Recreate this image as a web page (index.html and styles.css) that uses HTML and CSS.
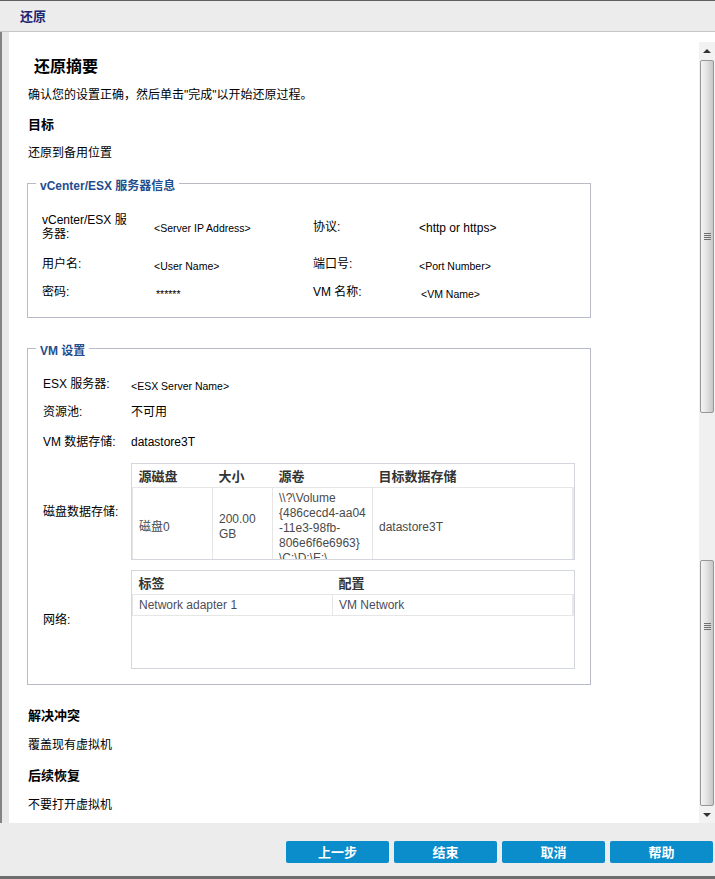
FILE: index.html
```html
<!DOCTYPE html>
<html lang="zh-CN">
<head>
<meta charset="utf-8">
<title>还原</title>
<link rel="stylesheet" href="styles.css">
</head>
<body>
<div class="window">
  <div class="titlebar"><span class="title">还原</span></div>
  <div class="body">
    <div class="gutter"></div>
    <div class="content">
      <div class="page">
        <h1 class="heading">还原摘要</h1>
        <p class="text desc">确认您的设置正确，然后单击"完成"以开始还原过程。</p>
        <h2 class="subhead">目标</h2>
        <p class="text">还原到备用位置</p>

        <fieldset class="group g1">
          <legend>vCenter/ESX 服务器信息</legend>
          <div class="info-grid">
            <div class="lbl">vCenter/ESX 服<br>务器:</div>
            <div class="val">&lt;Server IP Address&gt;</div>
            <div class="lbl">协议:</div>
            <div class="val big">&lt;http or https&gt;</div>
            <div class="lbl">用户名:</div>
            <div class="val">&lt;User Name&gt;</div>
            <div class="lbl">端口号:</div>
            <div class="val">&lt;Port Number&gt;</div>
            <div class="lbl">密码:</div>
            <div class="val shift">******</div>
            <div class="lbl">VM 名称:</div>
            <div class="val shift">&lt;VM Name&gt;</div>
          </div>
        </fieldset>

        <fieldset class="group g2">
          <legend>VM 设置</legend>
          <div class="vm-rows">
            <div class="vm-row r1"><div class="lbl">ESX 服务器:</div><div class="val">&lt;ESX Server Name&gt;</div></div>
            <div class="vm-row r2"><div class="lbl">资源池:</div><div class="val2">不可用</div></div>
            <div class="vm-row r3"><div class="lbl">VM 数据存储:</div><div class="val2">datastore3T</div></div>
            <div class="vm-row r4">
              <div class="lbl">磁盘数据存储:</div>
              <div class="gridbox disk">
                <table class="dt">
                  <colgroup><col class="c1"><col class="c2"><col class="c3"><col></colgroup>
                  <thead><tr><th>源磁盘</th><th>大小</th><th>源卷</th><th>目标数据存储</th></tr></thead>
                  <tbody><tr>
                    <td>磁盘0</td>
                    <td>200.00<br>GB</td>
                    <td class="vol">\\?\Volume<br>{486cecd4-aa04<br>-11e3-98fb-<br>806e6f6e6963}<br>\C:\D:\E:\</td>
                    <td class="last">datastore3T</td>
                  </tr></tbody>
                </table>
              </div>
            </div>
            <div class="vm-row r5">
              <div class="lbl">网络:</div>
              <div class="gridbox net">
                <table class="dt">
                  <colgroup><col class="n1"><col></colgroup>
                  <thead><tr><th>标签</th><th>配置</th></tr></thead>
                  <tbody><tr class="nrow"><td>Network adapter 1</td><td class="last">VM Network</td></tr></tbody>
                </table>
              </div>
            </div>
          </div>
        </fieldset>

        <h2 class="subhead s3">解决冲突</h2>
        <p class="text s4">覆盖现有虚拟机</p>
        <h2 class="subhead s4">后续恢复</h2>
        <p class="text s4">不要打开虚拟机</p>
      </div>
      <div class="scrollbar">
        <div class="sb-btn"><span class="arrow up"></span></div>
        <div class="thumb t1"><span class="grip"></span></div>
        <div class="track"></div>
        <div class="thumb t2"><span class="grip"></span></div>
        <div class="sb-btn"><span class="arrow down"></span></div>
      </div>
    </div>
  </div>
  <div class="footer">
    <button class="btn">上一步</button>
    <button class="btn">结束</button>
    <button class="btn">取消</button>
    <button class="btn">帮助</button>
  </div>
</div>
</body>
</html>
```
FILE: styles.css
```css
html, body {
  margin: 0;
  padding: 0;
  background: #ececec;
}
body {
  width: 715px;
  height: 879px;
  overflow: hidden;
  font-family: "Liberation Sans", "Noto Sans CJK SC", sans-serif;
  color: #000;
}
.window {
  width: 715px;
  height: 879px;
  box-sizing: border-box;
  border-top: 1px solid #5e5e5e;
  display: flex;
  flex-direction: column;
  background: #ececec;
}
.titlebar {
  height: 30px;
  flex: none;
  border-bottom: 1px solid #c6c6c6;
  display: flex;
  align-items: center;
  padding-left: 20px;
  background: #ececec;
}
.title {
  font: bold 13px/16px "Noto Sans CJK SC", sans-serif;
  color: #1c2470;
}
.body {
  height: 791px;
  flex: none;
  display: flex;
}
.gutter {
  width: 7px;
  flex: none;
  border-left: 2px solid #848484;
  background: #e9e9e9;
}
.content {
  flex: 1;
  display: flex;
  background: #fff;
}
.page {
  width: 672px;
  padding-left: 18px;
  overflow: hidden;
}
.heading {
  margin: 21px 0 0 7px;
  font: bold 16px/24px "Noto Sans CJK SC", sans-serif;
}
.text {
  margin: 11px 0 0 1px;
  font: 12px/18px "Liberation Sans", "Noto Sans CJK SC", sans-serif;
}
.text.desc {
  margin-top: 9px;
}
.subhead {
  margin: 11px 0 0 1px;
  font: bold 13px/18px "Noto Sans CJK SC", sans-serif;
}
.subhead.s3 {
  margin-top: 21px;
}
.s4 {
  margin-top: 12px;
}

.group {
  width: 564px;
  box-sizing: border-box;
  margin: 10px 0 0;
  border: 1px solid #b9bcc8;
  padding: 9px 0 11px 0;
  min-inline-size: 0;
}
.group legend {
  margin-left: 8px;
  padding: 6px 4px 0;
  font: bold 12px/16px "Liberation Sans", "Noto Sans CJK SC", sans-serif;
  color: #1f4e8e;
}
.group.g2 {
  margin-top: 19px;
  padding: 11px 0 15px 0;
}
.info-grid {
  display: grid;
  grid-template-columns: 112px 159px 106px 1fr;
  grid-template-rows: 47px 28px 28px;
  align-items: center;
  padding-left: 14px;
}
.lbl {
  font: 12px/14px "Liberation Sans", "Noto Sans CJK SC", sans-serif;
  color: #000;
}
.val {
  font: 10.5px/14px "Liberation Sans", "Noto Sans CJK SC", sans-serif;
  padding-top: 3px;
}
.val.big {
  font-size: 12px;
}
.val.shift {
  padding-left: 2px;
}
.val2 {
  font: 12px/14px "Liberation Sans", "Noto Sans CJK SC", sans-serif;
}
.vm-rows {
  padding-left: 15px;
}
.vm-row {
  display: flex;
  align-items: center;
}
.vm-row .lbl {
  width: 88px;
  flex: none;
}
.r1, .r2 { height: 28px; }
.r3 { height: 32px; }
.r4 { margin-top: 5px; }
.r5 { margin-top: 10px; }

.gridbox {
  width: 444px;
  box-sizing: border-box;
  border: 1px solid #d3d6dd;
  overflow: hidden;
  background: #fff;
}
.gridbox.disk { height: 97px; }
.gridbox.net { height: 99px; }
.dt {
  width: 100%;
  border-collapse: collapse;
  table-layout: fixed;
}
.dt col.c1 { width: 80px; }
.dt col.c2 { width: 60px; }
.dt col.c3 { width: 100px; }
.dt col.n1 { width: 200px; }
.dt th {
  height: 23px;
  padding: 0 6px;
  text-align: left;
  font: bold 13px/16px "Noto Sans CJK SC", sans-serif;
  color: #333;
}
.dt td {
  border: 1px solid #e6e6e6;
  padding: 0 6px;
  vertical-align: middle;
  font: 12px/15px "Liberation Sans", "Noto Sans CJK SC", sans-serif;
  color: #4a4a4a;
}
.dt td.vol {
  padding-top: 3px;
  vertical-align: top;
  height: 75px;
}
.dt td.last {
  border-right: 2px solid #e8e8e8;
}
.nrow td {
  height: 20px;
  padding-top: 0;
  color: #4d4d5a;
}

.scrollbar {
  width: 16px;
  margin-top: 10px;
  margin-right: 1px;
  display: flex;
  flex-direction: column;
  background: #f2f2f2;
}
.sb-btn {
  height: 18px;
  display: flex;
  align-items: center;
  justify-content: center;
}
.sb-btn:last-child {
  height: 17px;
}
.arrow {
  width: 0;
  height: 0;
  border-left: 4px solid transparent;
  border-right: 4px solid transparent;
}
.arrow.up { border-bottom: 4px solid #333; }
.arrow.down { border-top: 4px solid #333; }
.thumb {
  margin: 0 1px;
  box-sizing: border-box;
  border: 1px solid #979797;
  border-radius: 2px;
  background: linear-gradient(to right, #f4f4f4 0%, #e4e4e4 45%, #c6c6c6 100%);
  display: flex;
  justify-content: center;
}
.thumb.t1 {
  height: 353px;
  align-items: center;
}
.thumb.t2 {
  height: 246px;
  padding-top: 62px;
  align-items: flex-start;
}
.track {
  height: 147px;
  background: #f0f0f0;
}
.grip {
  width: 7px;
  height: 8px;
  background: repeating-linear-gradient(to bottom, #707070 0 1px, transparent 1px 2px);
}

.footer {
  height: 56px;
  flex: none;
  box-sizing: border-box;
  border-bottom: 3px solid #6d6d6d;
  display: flex;
  justify-content: flex-end;
  align-items: flex-start;
  gap: 5px;
  padding: 18px 2px 0 0;
  background: #ececec;
}
.btn {
  width: 103px;
  height: 22px;
  border: none;
  border-radius: 2px;
  background: #0b8ccb;
  color: #fff;
  font: bold 13px/22px "Noto Sans CJK SC", sans-serif;
  padding: 0;
  text-align: center;
}
```
